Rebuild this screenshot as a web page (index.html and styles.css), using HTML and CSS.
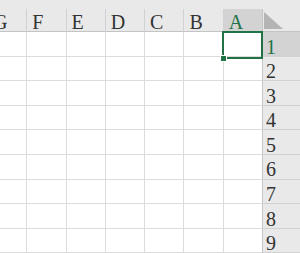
FILE: index.html
```html
<!DOCTYPE html>
<html>
<head>
    <title>Sheet</title>
    <link rel="stylesheet" href="styles.css">
</head>
<body>
<div class="band"></div>
<div class="sheet" id="sheet">
    <div class="corner">
        <svg width="37" height="22" viewBox="0 0 37 22"><polygon points="1,3 1,20 20,20" fill="#b4b4b4"/></svg>
    </div>
</div>

<script>
    const sheet = document.getElementById('sheet');
    const letters = ['A', 'B', 'C', 'D', 'E', 'F', 'G', 'H'];

    for (const letter of letters) {
        const cls = letter === 'A' ? 'colhead selected' : 'colhead';
        sheet.innerHTML += `<div class="${cls}">${letter}</div>`;
    }

    for (let row = 1; row <= 9; row++) {
        const headCls = row === 1 ? 'rowhead selected' : 'rowhead';
        sheet.innerHTML += `<div class="${headCls}">${row}</div>`;
        for (let col = 0; col < letters.length; col++) {
            const cls = row === 1 && col === 0 ? 'cell active' : 'cell';
            sheet.innerHTML += `<div class="${cls}"></div>`;
        }
    }
</script>
</body>
</html>
```

FILE: styles.css
```css
html, body {
    margin: 0;
    overflow: hidden;
}

body {
    direction: rtl;
    background: #fff;
    font-family: "Liberation Serif", "Times New Roman", serif;
}

.band {
    height: 9px;
    background: #e9e9e9;
}

.sheet {
    display: grid;
    grid-template-columns: 38px repeat(8, 39.3px);
    grid-template-rows: 23px repeat(9, 24.6px);
    width: max-content;
}

.corner, .colhead, .rowhead, .cell {
    box-sizing: border-box;
}

.corner {
    background: #e9e9e9;
    border-left: 1px solid #c6c6c6;
    border-bottom: 1px solid #c4c4c4;
}

.corner svg {
    display: block;
}

.colhead {
    background: #e9e9e9;
    border-left: 1px solid #d2d2d2;
    border-bottom: 1px solid #c4c4c4;
    text-align: left;
    padding: 3px 0 0 5px;
    font-size: 20px;
    line-height: 20px;
    color: #333;
}

.rowhead {
    background: #e9e9e9;
    border-left: 1px solid #c6c6c6;
    border-bottom: 1px solid #d2d2d2;
    text-align: left;
    padding: 4.5px 0 0 3px;
    font-size: 20px;
    line-height: 20px;
    color: #333;
}

.selected {
    background: #d3d3d3;
    color: #217346;
}

.cell {
    border-left: 1px solid #dcdcdc;
    border-bottom: 1px solid #dcdcdc;
}

.cell.active {
    position: relative;
    z-index: 1;
}

.cell.active::after {
    content: "";
    position: absolute;
    left: -2px;
    right: -1px;
    top: -1px;
    bottom: -3px;
    border: 2px solid #217346;
}

.cell.active::before {
    content: "";
    position: absolute;
    left: -4px;
    bottom: -6px;
    width: 5px;
    height: 5px;
    background: #217346;
    border: 1px solid #fff;
    z-index: 2;
}
```
